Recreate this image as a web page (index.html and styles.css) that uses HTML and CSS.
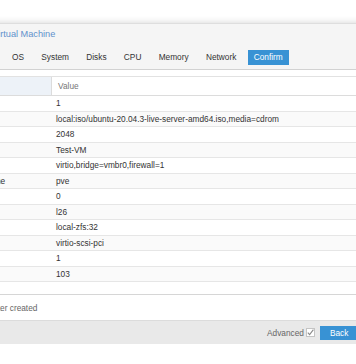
FILE: index.html
```html
<!DOCTYPE html>
<html lang="en">
    <head>
        <meta charset="UTF-8" />
        <meta name="viewport" content="width=device-width, initial-scale=1.0" />
        <title>Create: Virtual Machine</title>
        <link rel="stylesheet" href="styles.css">
    </head>

    <body>
        <div class="page">
            <div class="window">
                <div class="window-title">Create: Virtual Machine</div>

                <div class="tabs">
                    <span class="tab">General</span>
                    <span class="tab">OS</span>
                    <span class="tab">System</span>
                    <span class="tab">Disks</span>
                    <span class="tab">CPU</span>
                    <span class="tab">Memory</span>
                    <span class="tab">Network</span>
                    <span class="tab active">Confirm</span>
                </div>

                <div class="window-body">
                    <div class="grid">
                        <div class="grid-head">
                            <div class="cell key">Key</div>
                            <div class="cell value">Value</div>
                        </div>
                        <div class="grid-row"><div class="cell key">cores</div><div class="cell value">1</div></div>
                        <div class="grid-row"><div class="cell key">ide2</div><div class="cell value">local:iso/ubuntu-20.04.3-live-server-amd64.iso,media=cdrom</div></div>
                        <div class="grid-row"><div class="cell key">memory</div><div class="cell value">2048</div></div>
                        <div class="grid-row"><div class="cell key">name</div><div class="cell value">Test-VM</div></div>
                        <div class="grid-row"><div class="cell key">net0</div><div class="cell value">virtio,bridge=vmbr0,firewall=1</div></div>
                        <div class="grid-row"><div class="cell key">nodename</div><div class="cell value">pve</div></div>
                        <div class="grid-row"><div class="cell key">numa</div><div class="cell value">0</div></div>
                        <div class="grid-row"><div class="cell key">ostype</div><div class="cell value">l26</div></div>
                        <div class="grid-row"><div class="cell key">scsi0</div><div class="cell value">local-zfs:32</div></div>
                        <div class="grid-row"><div class="cell key">scsihw</div><div class="cell value">virtio-scsi-pci</div></div>
                        <div class="grid-row"><div class="cell key">sockets</div><div class="cell value">1</div></div>
                        <div class="grid-row"><div class="cell key">vmid</div><div class="cell value">103</div></div>
                    </div>

                    <div class="start-row">
                        <span class="checkbox"></span>
                        <span>Start after created</span>
                    </div>
                </div>

                <div class="footer">
                    <span class="advanced">Advanced</span>
                    <span class="checkbox checked">
                        <svg width="9" height="9" viewBox="0 0 9 9">
                            <path d="M1.8 4.6 L3.6 6.6 L7.4 1.6" fill="none" stroke="#8a8a8a" stroke-width="1.1" />
                        </svg>
                    </span>
                    <span class="btn">Back</span>
                    <span class="btn">Finish</span>
                </div>
            </div>
        </div>
    </body>
</html>
```

FILE: styles.css
```css
body {
    margin: 0;
    overflow: hidden;
    background-color: #fff;
    font-family: 'Liberation Sans', Arial, sans-serif;
    font-size: 8.3px;
    color: #333;
}

.page {
    padding-top: 23px;
}

.window {
    margin-left: -47px;
    width: 460px;
    background-color: #f5f5f5;
    border-top: 1px solid #dedede;
    box-shadow: 0 0 7px rgba(0, 0, 0, 0.18);
}

.window-title {
    height: 21px;
    line-height: 21px;
    padding: 0 6.5px;
    font-size: 9.2px;
    color: #5f91cc;
}

.tabs {
    display: flex;
    gap: 5.3px;
    padding: 5px 6.2px 4px;
    border-bottom: 1px solid #d2d2d2;
}

.tab {
    height: 15px;
    line-height: 15px;
    padding: 0 6px;
    white-space: nowrap;
}

.tab.active {
    background-color: #3892d4;
    color: #fff;
}

.window-body {
    background-color: #fff;
    padding: 6px 0 0 7px;
}

.grid {
    height: 218px;
    border-bottom: 1px solid #d6d6d6;
}

.grid-head {
    display: flex;
    height: 20px;
    border-top: 1px solid #e2e2e2;
    border-bottom: 1px solid #dcdcdc;
    box-sizing: border-box;
    color: #777;
}

.grid-head .key {
    background-color: #edf2f8;
    border-right: 1px solid #dcdcdc;
}

.grid-head .cell {
    line-height: 18px;
}

.grid-head .value {
    padding-left: 6px;
}

.grid-row {
    display: flex;
    height: 15.5px;
    border-bottom: 1px solid #e6e6e6;
    box-sizing: border-box;
}

.grid-row:nth-child(odd) {
    background-color: #fafafa;
}

.cell {
    line-height: 14.5px;
    white-space: nowrap;
}

.key {
    width: 92px;
    flex: none;
    box-sizing: border-box;
    padding-left: 6px;
}

.value {
    padding-left: 4px;
}

.start-row {
    display: flex;
    align-items: center;
    gap: 2px;
    height: 25px;
    color: #666;
}

.checkbox {
    display: inline-block;
    width: 9px;
    height: 9px;
    box-sizing: border-box;
    border: 1px solid #c4c4c4;
    background-color: #fff;
}

.checkbox svg {
    display: block;
    margin: -1px;
}

.footer {
    display: flex;
    align-items: center;
    height: 23px;
    padding-left: 314px;
    background-color: #e9e9e9;
    border-top: 1px solid #dcdcdc;
    color: #666;
}

.advanced {
    margin-right: 2px;
}

.btn {
    height: 14px;
    line-height: 14px;
    padding: 0 10px;
    margin-left: 5px;
    background-color: #3892d4;
    color: #fff;
}
```
